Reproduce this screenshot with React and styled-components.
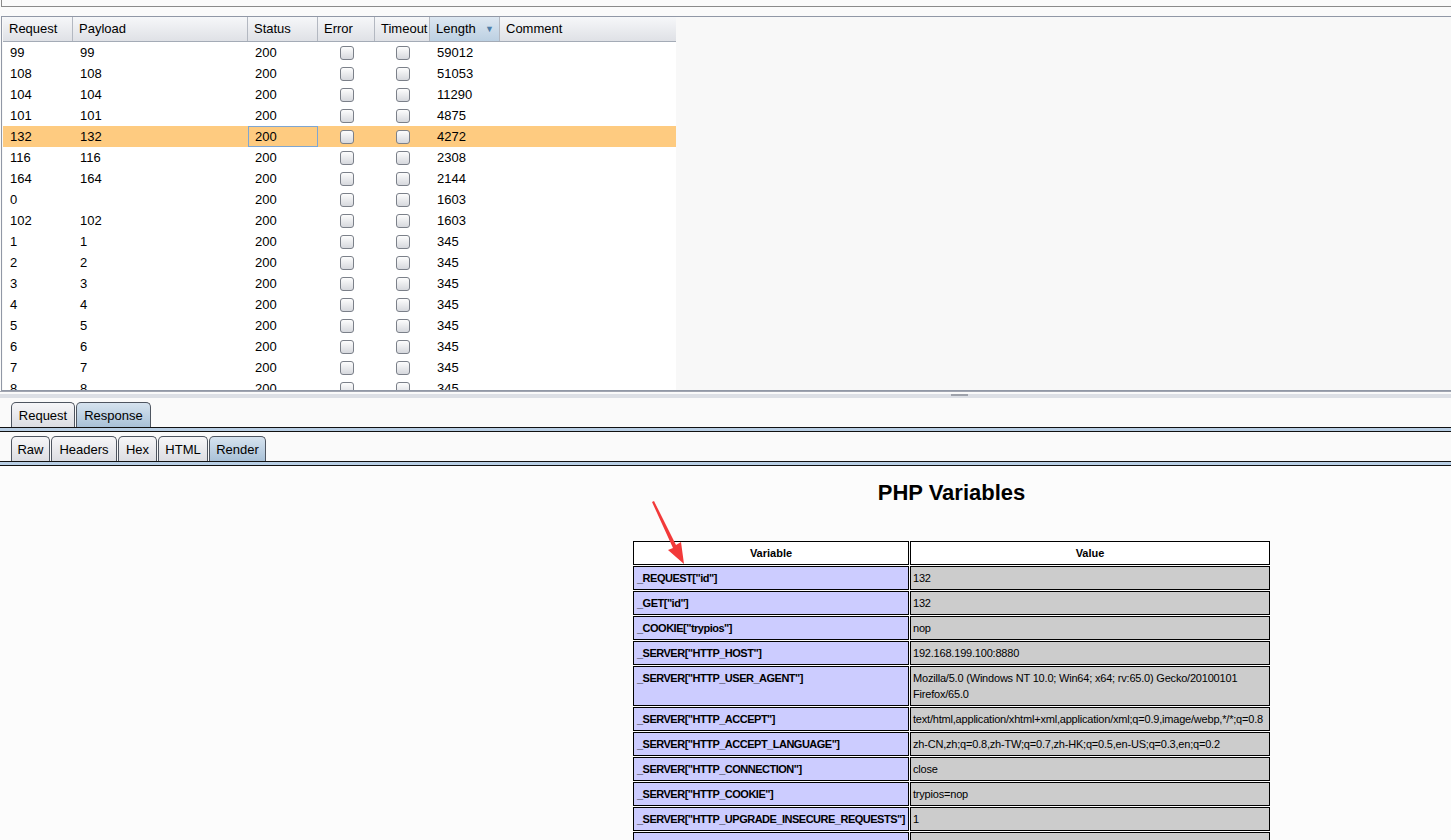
import React from "react";
import styled, { createGlobalStyle } from "styled-components";

const GlobalStyle = createGlobalStyle`
    html, body {
        margin: 0;
        padding: 0;
        background: #fafafa;
        font-family: "Liberation Sans", Arial, sans-serif;
        color: #000;
    }
`

const Page = styled.div`
    position: relative;
    width: 1451px;
    height: 840px;
    overflow: hidden;
    display: flex;
    flex-direction: column;
    & > * { flex-shrink: 0; }
`

const TopField = styled.div`
    height: 6px;
    margin-left: 1px;
    border-left: 1px solid #8a8a8a;
    border-bottom: 1px solid #8a8a8a;
    background: #fafafa;
`

const ScrollPane = styled.div`
    margin-top: 9px;
    margin-left: 1px;
    height: 373px;
    border-top: 1px solid #9198a6;
    border-left: 1px solid #9198a6;
    border-bottom: 1px solid #9198a6;
    padding-left: 1px;
    background: #f8f8f8;
    overflow: hidden;
`

const Table = styled.div`
    width: 673px;
    height: 100%;
    background: #fff;
`

const HeaderRow = styled.div`
    display: grid;
    grid-template-columns: 70px 175px 70px 57px 55px 70px 176px;
    height: 24px;
    border-bottom: 1px solid #a4abb6;
    background: linear-gradient(#f6f7f9, #dfe1e6);
`

const HeaderCell = styled.div`
    display: flex;
    align-items: center;
    justify-content: space-between;
    padding: 0 6px 1px;
    font-size: 13px;
    border-right: 1px solid #b3b8c1;
    background: ${p => p.$sorted ? "linear-gradient(#dde7f1, #bcd0e2)" : "transparent"};
    &:last-child { border-right: none; }
`

const SortArrow = styled.span`
    font-size: 9px;
    color: #4f7ea8;
    margin-right: -1px;
`

const Row = styled.div`
    display: grid;
    grid-template-columns: 70px 175px 70px 57px 55px 70px 176px;
    height: 21px;
    background: ${p => p.$selected ? "#fecb80" : "#fff"};
`

const Cell = styled.div`
    display: flex;
    align-items: center;
    justify-content: ${p => p.$center ? "center" : "flex-start"};
    padding: 0 6px;
    font-size: 13px;
    box-sizing: border-box;
    border: 1px solid ${p => p.$focus ? "#7fa6d1" : "transparent"};
`

const Check = styled.span`
    width: 12px;
    height: 12px;
    border: 1px solid #7b8089;
    border-radius: 3px;
    background: linear-gradient(#fdfdfd, #d6d8dd);
`

const Splitter = styled.div`
    height: 8px;
    border-top: 1px solid #a0a4b0;
    display: flex;
    align-items: flex-start;
    padding-top: 2px;
    box-sizing: border-box;
    background: linear-gradient(#fafafa 0 2px, #dcdfe5 2px 6px, #fafafa 6px);
`

const Grip = styled.div`
    width: 17px;
    height: 2px;
    margin-left: 951px;
    background: #9ea2ab;
`

const TabStrip = styled.div`
    display: flex;
    align-items: flex-end;
    gap: 1px;
    padding-left: 11px;
    margin-top: ${p => p.$gap}px;
    height: 26px;
`

const Tab = styled.div`
    box-sizing: border-box;
    width: ${p => p.$w}px;
    height: 25px;
    display: flex;
    align-items: center;
    justify-content: center;
    font-size: 13px;
    border: 1px solid #4e5560;
    border-bottom: none;
    border-radius: 5px 5px 0 0;
    background: ${p => p.$active ? "linear-gradient(#d6e3ef, #a9c1d7)" : "linear-gradient(#f6f6f8, #dcdde2)"};
`

const TabRule = styled.div`
    height: 3px;
    border-top: 1px solid #111;
    border-bottom: 1px solid #111;
    background: #b8cee4;
`

const RenderArea = styled.div`
    flex: 1 1 auto;
    min-height: 0;
    overflow: hidden;
    background: #fcfcfc;
    padding-left: 632px;
`

const Content = styled.div`
    width: 639px;
`

const Heading = styled.h1`
    margin: 15px 0 0;
    height: 59px;
    text-align: center;
    font-size: 22px;
    font-weight: bold;
    line-height: 24px;
    font-family: "Liberation Sans", Arial, sans-serif;
`

const VarTable = styled.table`
    border-collapse: separate;
    border-spacing: 1px;
    width: 639px;
    table-layout: fixed;
    font-family: "Liberation Sans", Arial, sans-serif;
    font-size: 11px;
`

const Th = styled.th`
    border: 1px solid #000;
    background: #fff;
    height: 22px;
    padding: 0 3px;
    font-weight: bold;
    text-align: center;
    width: ${p => p.$w}px;
`

const VarCell = styled.td`
    border: 1px solid #000;
    background: #ccccff;
    padding: 3px 3px;
    line-height: 16px;
    font-weight: bold;
    white-space: nowrap;
    vertical-align: top;
    letter-spacing: -0.5px;
`

const ValCell = styled.td`
    border: 1px solid #000;
    background: #cccccc;
    padding: 3px 2px;
    line-height: 16px;
    vertical-align: top;
    letter-spacing: -0.2px;
`

const Arrow = styled.svg`
    position: absolute;
    left: 640px;
    top: 495px;
`

const rows = [
    ["99", "99", "59012"],
    ["108", "108", "51053"],
    ["104", "104", "11290"],
    ["101", "101", "4875"],
    ["132", "132", "4272"],
    ["116", "116", "2308"],
    ["164", "164", "2144"],
    ["0", "", "1603"],
    ["102", "102", "1603"],
    ["1", "1", "345"],
    ["2", "2", "345"],
    ["3", "3", "345"],
    ["4", "4", "345"],
    ["5", "5", "345"],
    ["6", "6", "345"],
    ["7", "7", "345"],
    ["8", "8", "345"],
]

const vars = [
    ['_REQUEST["id"]', "132"],
    ['_GET["id"]', "132"],
    ['_COOKIE["trypios"]', "nop"],
    ['_SERVER["HTTP_HOST"]', "192.168.199.100:8880"],
    ['_SERVER["HTTP_USER_AGENT"]', "Mozilla/5.0 (Windows NT 10.0; Win64; x64; rv:65.0) Gecko/20100101 Firefox/65.0"],
    ['_SERVER["HTTP_ACCEPT"]', "text/html,application/xhtml+xml,application/xml;q=0.9,image/webp,*/*;q=0.8"],
    ['_SERVER["HTTP_ACCEPT_LANGUAGE"]', "zh-CN,zh;q=0.8,zh-TW;q=0.7,zh-HK;q=0.5,en-US;q=0.3,en;q=0.2"],
    ['_SERVER["HTTP_CONNECTION"]', "close"],
    ['_SERVER["HTTP_COOKIE"]', "trypios=nop"],
    ['_SERVER["HTTP_UPGRADE_INSECURE_REQUESTS"]', "1"],
    ['_SERVER["PATH"]', "/usr/local/sbin:/usr/local/bin:/usr/sbin:/usr/bin:/sbin:/bin"],
]

export default function App() {
    return (
        <Page>
            <GlobalStyle />
            <TopField />
            <ScrollPane>
                <Table>
                    <HeaderRow>
                        <HeaderCell>Request</HeaderCell>
                        <HeaderCell>Payload</HeaderCell>
                        <HeaderCell>Status</HeaderCell>
                        <HeaderCell>Error</HeaderCell>
                        <HeaderCell>Timeout</HeaderCell>
                        <HeaderCell $sorted>Length<SortArrow>▼</SortArrow></HeaderCell>
                        <HeaderCell>Comment</HeaderCell>
                    </HeaderRow>
                    {rows.map((r, i) => (
                        <Row key={i} $selected={r[0] === "132"}>
                            <Cell>{r[0]}</Cell>
                            <Cell>{r[1]}</Cell>
                            <Cell $focus={r[0] === "132"}>200</Cell>
                            <Cell $center><Check /></Cell>
                            <Cell $center><Check /></Cell>
                            <Cell>{r[2]}</Cell>
                            <Cell />
                        </Row>
                    ))}
                </Table>
            </ScrollPane>
            <Splitter><Grip /></Splitter>
            <TabStrip $gap={2}>
                <Tab $w={64}>Request</Tab>
                <Tab $w={75} $active>Response</Tab>
            </TabStrip>
            <TabRule />
            <TabStrip $gap={3}>
                <Tab $w={39}>Raw</Tab>
                <Tab $w={66}>Headers</Tab>
                <Tab $w={39}>Hex</Tab>
                <Tab $w={50}>HTML</Tab>
                <Tab $w={57} $active>Render</Tab>
            </TabStrip>
            <TabRule />
            <RenderArea>
                <Content>
                    <Heading>PHP Variables</Heading>
                    <VarTable>
                        <thead>
                            <tr>
                                <Th $w={268}>Variable</Th>
                                <Th>Value</Th>
                            </tr>
                        </thead>
                        <tbody>
                            {vars.map(([k, v]) => (
                                <tr key={k}>
                                    <VarCell>{k}</VarCell>
                                    <ValCell>{v}</ValCell>
                                </tr>
                            ))}
                        </tbody>
                    </VarTable>
                </Content>
            </RenderArea>
            <Arrow width="60" height="75" viewBox="0 0 60 75">
                <polygon
                    points="12,7 14,6 36,50 41,47 44,69 28,55 33,53"
                    fill="#f23a3a"
                />
            </Arrow>
        </Page>
    )
}
